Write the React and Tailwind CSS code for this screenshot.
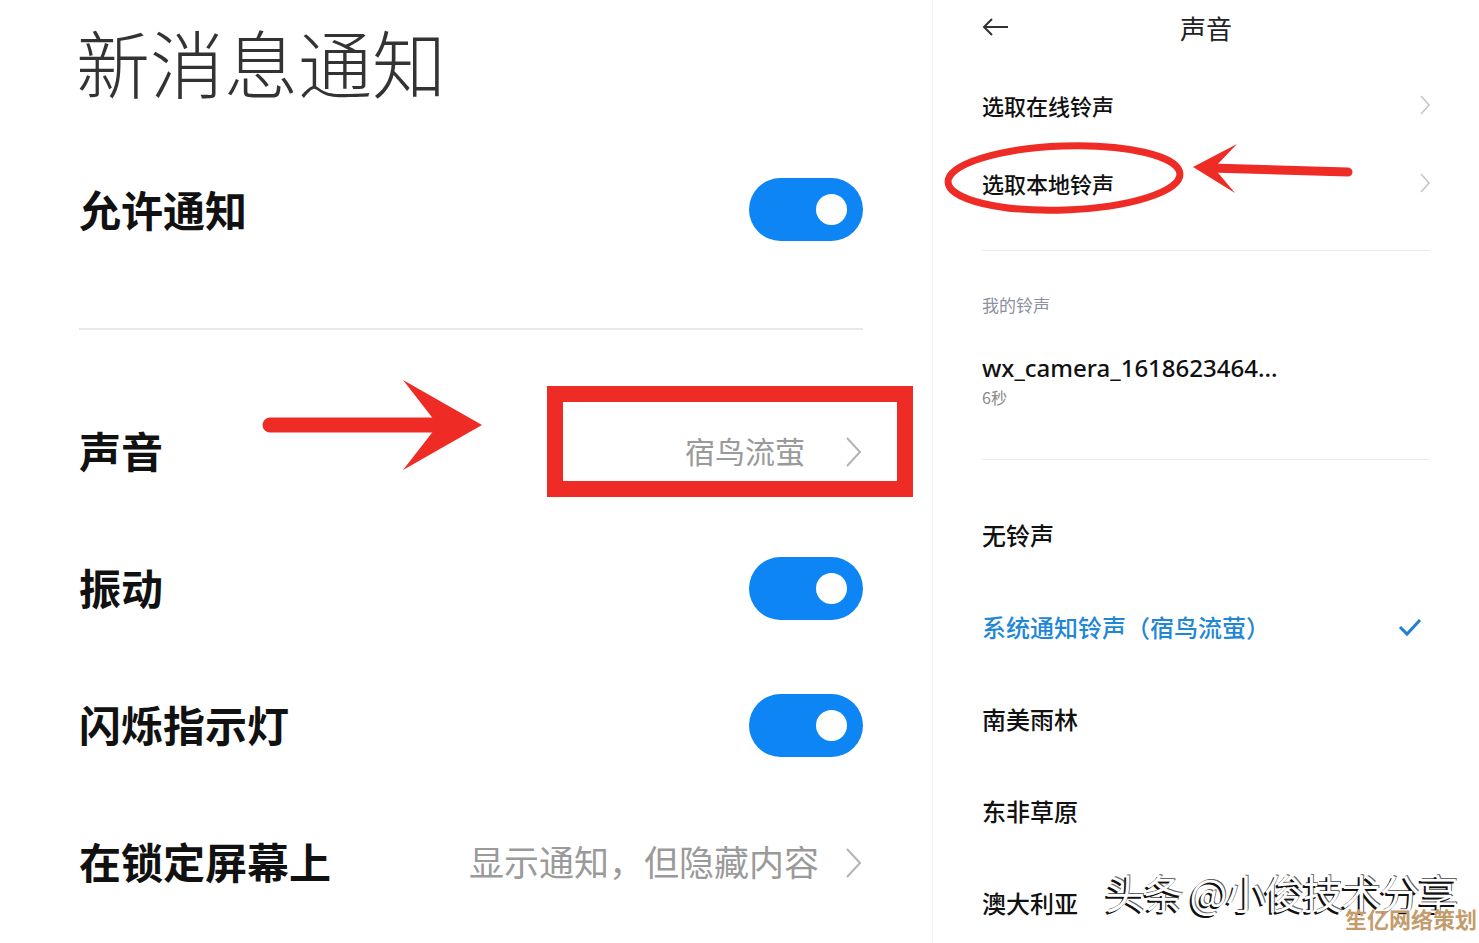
import React from "react";

const cjk = "font-['Noto_Sans_CJK_SC','Noto_Sans',sans-serif]";

function Toggle() {
  return (
    <div className="w-[114px] h-[63px] rounded-full bg-[#0e85f4] flex items-center justify-end pr-[16px]">
      <div className="w-[31px] h-[31px] rounded-full bg-white" />
    </div>
  );
}

function BigChevron() {
  return (
    <svg width="18" height="32" viewBox="0 0 18 32" className="shrink-0">
      <polyline points="2,2 15,16 2,30" fill="none" stroke="#b3b3b3" strokeWidth="2" />
    </svg>
  );
}

function SmallChevron() {
  return (
    <svg width="10" height="20" viewBox="0 0 10 20" className="shrink-0">
      <polyline points="1,1 9,10 1,19" fill="none" stroke="#c4c4c4" strokeWidth="1.5" />
    </svg>
  );
}

function LeftRow({ label, children }) {
  return (
    <div className="h-[137px] flex items-center justify-between">
      <span className="text-[42px] font-bold text-[#111] -mt-[4px]">{label}</span>
      {children}
    </div>
  );
}

function Ring({ label }) {
  return (
    <div className="h-[92px] flex items-center text-[24px] font-medium text-[#111]">{label}</div>
  );
}

export default function App() {
  return (
    <div className={`relative w-[1479px] h-[943px] overflow-hidden bg-white flex ${cjk}`}>
      {/* left: 新消息通知 */}
      <div className="w-[933px] shrink-0 border-r border-[#f2f2f2] pl-[79px] pr-[69px]">
        <div className="h-[140px] pt-[24px]">
          <h1 className="text-[74px] leading-none font-light text-[#333] -ml-[3px]">新消息通知</h1>
        </div>
        <div className="h-[138px] flex items-center justify-between">
          <span className="text-[42px] font-bold text-[#111] -mt-[2px]">允许通知</span>
          <Toggle />
        </div>
        <div className="mt-[50px] h-[2px] bg-[#e8e8e8]" />
        <div className="mt-[53px]">
          <LeftRow label="声音">
            <div className="flex items-center gap-[40px]">
              <span className="text-[30px] text-[#9a9a9a] -mt-[2px]">宿鸟流萤</span>
              <BigChevron />
            </div>
          </LeftRow>
          <LeftRow label="振动">
            <Toggle />
          </LeftRow>
          <LeftRow label="闪烁指示灯">
            <Toggle />
          </LeftRow>
          <LeftRow label="在锁定屏幕上">
            <div className="flex items-center gap-[26px]">
              <span className="text-[35px] text-[#9a9a9a] -mt-[2px]">显示通知，但隐藏内容</span>
              <BigChevron />
            </div>
          </LeftRow>
        </div>
      </div>

      {/* right: 声音 */}
      <div className="flex-1 pl-[49px] pr-[49px]">
        <div className="h-[54px] grid grid-cols-[1fr_auto_1fr] items-center">
          <svg width="28" height="20" viewBox="0 0 28 20">
            <path d="M26 10H2M10 2L2 10l8 8" fill="none" stroke="#333" strokeWidth="2" />
          </svg>
          <span className="text-[26px] text-[#222]">声音</span>
          <span />
        </div>
        <div className="mt-[12px] h-[78px] flex items-center justify-between">
          <span className="text-[22px] font-medium text-[#111]">选取在线铃声</span>
          <SmallChevron />
        </div>
        <div className="h-[78px] flex items-center justify-between">
          <span className="text-[22px] font-medium text-[#111]">选取本地铃声</span>
          <SmallChevron />
        </div>
        <div className="mt-[28px] h-px bg-[#ececec]" />
        <div className="mt-[44px] text-[17px] leading-[20px] text-[#8d90a0]">我的铃声</div>
        <div className="mt-[38px] text-[24px] leading-[30px] font-medium text-[#111] font-['Noto_Sans',sans-serif]">
          wx_camera_1618623464...
        </div>
        <div className="mt-[4px] text-[16px] leading-[20px] text-[#888]">6秒</div>
        <div className="mt-[52px] h-px bg-[#ececec]" />
        <div className="mt-[29px]">
          <Ring label="无铃声" />
          <div className="h-[92px] flex items-center justify-between text-[24px] font-medium text-[#1f87d6]">
            <span>系统通知铃声（宿鸟流萤）</span>
            <svg width="24" height="20" viewBox="0 0 24 20" className="mr-[8px]">
              <polyline points="2,10 9,17 22,3" fill="none" stroke="#1f7fd0" strokeWidth="3" />
            </svg>
          </div>
          <Ring label="南美雨林" />
          <Ring label="东非草原" />
          <Ring label="澳大利亚" />
        </div>
      </div>

      {/* annotations laid over the screenshots */}
      <div className="absolute left-[547px] top-[386px] w-[366px] h-[111px] border-[16px] border-[#ee2c25]" />
      <svg className="absolute left-0 top-0 pointer-events-none" width="1479" height="943">
        <line x1="270" y1="425" x2="445" y2="425" stroke="#ee2c25" strokeWidth="15" strokeLinecap="round" />
        <polygon points="403,380 482,425 403,470 438,425" fill="#ee2c25" />
        <ellipse cx="1064" cy="178" rx="116" ry="32" fill="none" stroke="#ee2c25" strokeWidth="7" transform="rotate(-2 1064 178)" />
        <line x1="1210" y1="168" x2="1348" y2="172" stroke="#ee2c25" strokeWidth="9" strokeLinecap="round" />
        <polygon points="1193,167 1237,144 1214,168 1235,193" fill="#ee2c25" />
      </svg>
      <div className="absolute left-[1105px] top-[872px] text-[40px] leading-none text-white tracking-[-1.5px] [text-shadow:-2px_2px_0_#111,1px_-1px_0_#666]">
        头条 @小俊技术分享
      </div>
      <div className="absolute left-[1345px] top-[907px] text-[22px] leading-none font-bold text-[#c49b6c]">
        笙亿网络策划
      </div>
    </div>
  );
}
